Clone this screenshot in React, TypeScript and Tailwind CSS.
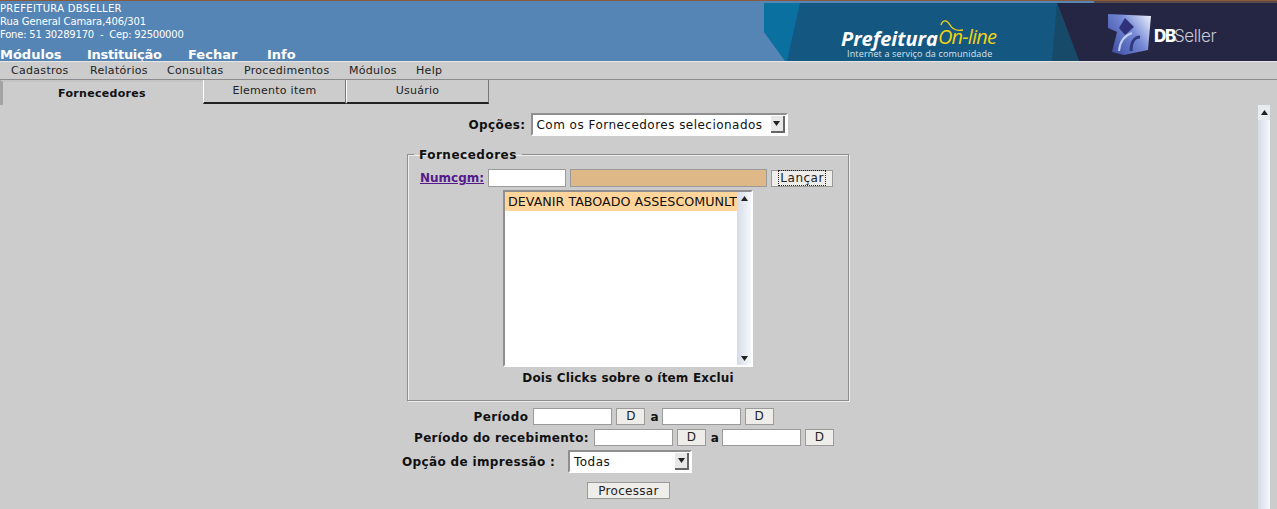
import type { ReactNode } from "react";

const menu = [
  { label: "Cadastros", w: "w-[79px]" },
  { label: "Relatórios", w: "w-[77px]" },
  { label: "Consultas", w: "w-[77px]" },
  { label: "Procedimentos", w: "w-[105px]" },
  { label: "Módulos", w: "w-[67px]" },
  { label: "Help", w: "w-[30px]" },
];

function DateField() {
  return (
    <>
      <input className="h-[17px] w-[79px] border border-[#9a9a9a] bg-white" />
      <button className="ml-[4px] h-[17px] w-[29px] border border-[#9a9a9a] bg-[#efedea] text-[12px] font-normal leading-[15px] text-[#222]">
        D
      </button>
    </>
  );
}

function Arrow({ up }: { up?: boolean }) {
  return (
    <svg width="7" height="5" viewBox="0 0 7 5" className="block">
      <path d={up ? "M3.5 0L7 5H0Z" : "M0 0H7L3.5 5Z"} fill="#222" />
    </svg>
  );
}

function SelectBox({ className, children }: { className: string; children: ReactNode }) {
  return (
    <div
      className={`flex items-center border-2 border-t-[#8f8f8f] border-l-[#8f8f8f] border-r-white border-b-white bg-white ${className}`}
    >
      <span className="flex-1 whitespace-nowrap pl-[4px] text-[12px] tracking-[0.47px] text-[#111]">{children}</span>
      <span className="mr-[1px] flex h-[17px] w-[14px] items-center justify-center border-r-2 border-b-2 border-[#666] bg-[#e8e8e8]">
        <Arrow />
      </span>
    </div>
  );
}

function Banner() {
  return (
    <div className="relative h-[58px] w-[513px] shrink-0 overflow-hidden bg-[#145780]">
      <svg width="513" height="58" viewBox="0 0 513 58" className="absolute inset-0">
        <defs>
          <linearGradient id="cube" x1="0" y1="0.8" x2="1" y2="0.1">
            <stop offset="0" stopColor="#3f4fa6" />
            <stop offset="0.55" stopColor="#7488d4" />
            <stop offset="1" stopColor="#e6ecfb" />
          </linearGradient>
        </defs>
        <path d="M0 0H36L23 58H21L0 29Z" fill="#0a709f" />
        <path d="M0 29L21 58H0Z" fill="#5585b5" />
        <path d="M293 0H513V58H315Z" fill="#252643" />
        <path d="M293 0L315 58H288Z" fill="#174a69" />
        <g className="blur-[0.5px]">
          <path d="M344 11L387 13L384 47L360 52L348 49L353 29L344 25Z" fill="url(#cube)" />
          <path d="M361 15L370 24L361 32L355 25Z" fill="#2f3278" />
          <path d="M355 48C356 36 362 32 368 30" fill="none" stroke="#c0ccf0" strokeWidth="2" />
          <path d="M367 48C367 40 370 34 376 34" fill="none" stroke="#2e3a7d" strokeWidth="3" />
        </g>
      </svg>
      <span className="absolute left-[77px] top-[26px] font-['Open_Sans',sans-serif] text-[20px] font-bold italic leading-[20px] text-white">
        Prefeitura
      </span>
      <span className="absolute left-[174px] top-[24px] font-['Open_Sans',sans-serif] text-[20px] italic leading-[20px] tracking-[-0.8px] text-[#f0d215]">
        On-line
      </span>
      <svg width="24" height="14" viewBox="0 0 24 14" className="absolute left-[176px] top-[16px]">
        <path d="M1 6C3 0 7 1 10 6C13 11 18 12 23 11" fill="none" stroke="#f0d215" strokeWidth="1.4" />
      </svg>
      <span className="absolute left-[83px] top-[46px] whitespace-nowrap font-['Open_Sans',sans-serif] text-[9px] leading-[10px] tracking-[0.15px] text-[#d8e4ec]">
        Internet a serviço da comunidade
      </span>
      <span className="absolute left-[390px] top-[23px] font-['Inter',sans-serif] text-[17px] font-extrabold leading-[20px] tracking-[-1.2px] text-white">
        DB
      </span>
      <span className="absolute left-[410px] top-[23px] font-['Inter',sans-serif] text-[17px] font-light leading-[20px] tracking-[-0.4px] text-[#c9cad6]">
        Seller
      </span>
    </div>
  );
}

export default function App() {
  return (
    <div className="flex h-[509px] w-[1277px] flex-col overflow-hidden bg-[#cccccc] font-['DejaVu_Sans',sans-serif] text-[#111]">
      <div className="h-[1px] bg-[#8a5a3c]" />
      <header className="flex h-[60px] bg-[#5585b5]">
        <div className="flex-1 pt-[1px] text-[10px] leading-[13px] text-white">
          <p className="tracking-[0.32px]">PREFEITURA DBSELLER</p>
          <p className="tracking-[-0.1px]">Rua General Camara,406/301</p>
          <p className="whitespace-pre tracking-[-0.2px]">Fone: 51 30289170  -  Cep: 92500000</p>
          <nav className="mt-[6px] flex text-[13px] font-bold leading-[16px]">
            <span className="w-[87px]">Módulos</span>
            <span className="w-[101px] tracking-[-0.3px]">Instituição</span>
            <span className="w-[79px]">Fechar</span>
            <span>Info</span>
          </nav>
        </div>
        <div className="flex flex-col justify-end">
          <div className="flex h-[2px] justify-end">
            <div className="w-[183px] bg-[#5c4a48]" />
          </div>
          <Banner />
        </div>
      </header>
      <div className="h-[1px] bg-[#e6e6e6]" />
      <nav className="flex h-[18px] items-center border-b border-[#8c8c8c] pl-[11px] text-[11px] leading-[14px] tracking-[0.3px] text-[#222]">
        {menu.map((m) => (
          <span key={m.label} className={m.w}>
            {m.label}
          </span>
        ))}
      </nav>

      <div className="flex h-[25px]">
        <div className="flex w-[203px] items-center justify-center border-l-[3px] border-t-[2px] border-l-[#a3a3a3] border-t-[#c4c4c4] pr-[2px] pt-[2px] text-[11px] font-bold tracking-[0.3px]">
          Fornecedores
        </div>
        {["Elemento item", "Usuário"].map((t) => (
          <div
            key={t}
            className="flex h-[24px] w-[143px] items-center justify-center border-b-2 border-l border-r border-b-[#222] border-l-white border-r-[#777] pt-[1px] text-[11px] tracking-[0.25px] text-[#222]"
          >
            {t}
          </div>
        ))}
      </div>

      <div className="flex flex-1">
        <main className="flex w-[1258px] flex-col items-center text-[12px] font-bold">
          <div className="mr-[2px] mt-[8px] flex items-center gap-[5px]">
            <span className="tracking-[0.4px]">Opções:</span>
            <SelectBox className="h-[23px] w-[257px] font-normal">Com os Fornecedores selecionados</SelectBox>
          </div>

          <fieldset className="mr-[2px] mt-[10px] h-[255px] w-[442px] border border-[#8e8e8e] shadow-[inset_1px_1px_0_#eee,1px_1px_0_#eee]">
            <legend className="ml-[6px] px-[5px] pt-[2px] text-[12px] leading-[14px] tracking-[0.5px]">Fornecedores</legend>
            <div className="ml-[12px] mt-[7px] flex items-center">
              <a className="text-[#551a8b] underline">Numcgm:</a>
              <input className="ml-[4px] h-[18px] w-[78px] border border-[#9a9a9a] bg-white" />
              <input className="ml-[4px] h-[18px] w-[197px] border border-[#9a9a9a] bg-[#deb887]" />
              <button className="ml-[4px] h-[17px] w-[62px] border border-[#9a9a9a] bg-[#efedea] text-[12px] font-normal leading-[13px] tracking-[0.5px] text-[#222]">
                <span className="border border-dotted border-[#222] px-[1px]">Lançar</span>
              </button>
            </div>
            <div className="mx-auto mt-[3px] flex h-[177px] w-[250px] border-2 border-l-[#8f8f8f] border-t-[#8f8f8f] border-r-white border-b-white bg-white">
              <div className="w-[234px] overflow-hidden">
                <div className="h-[19px] whitespace-nowrap bg-[#ffd59b] pl-[3px] text-[12.7px] font-normal leading-[19px]">
                  DEVANIR TABOADO ASSESCOMUNLTDA
                </div>
              </div>
              <div className="flex w-[14px] flex-col items-center justify-between bg-linear-to-r from-[#d5dce8] to-[#f6f8fc] py-[4px]">
                <Arrow up />
                <Arrow />
              </div>
            </div>
            <p className="mt-[2px] text-center text-[12px] leading-[18px] tracking-[0.17px]">Dois Clicks sobre o ítem Exclui</p>
          </fieldset>

          <div className="mr-[11px] mt-[5px] flex h-[21px] items-center">
            <span className="mr-[5px] tracking-[0.42px]">Período</span>
            <DateField />
            <span className="ml-[5px] mr-[3px]">a</span>
            <DateField />
          </div>
          <div className="mr-[10px] flex h-[21px] items-center">
            <span className="mr-[5px] tracking-[0.33px]">Período do recebimento:</span>
            <DateField />
            <span className="ml-[5px] mr-[3px]">a</span>
            <DateField />
          </div>
          <div className="mr-[164px] mt-[2px] flex w-[290px] items-center">
            <span className="w-[166px] whitespace-nowrap tracking-[0.35px]">Opção de impressão :</span>
            <SelectBox className="h-[23px] w-[124px] font-normal">Todas</SelectBox>
          </div>
          <button className="mr-[1px] mt-[9px] h-[17px] w-[83px] border border-[#9a9a9a] bg-[#efedea] text-[12px] font-normal leading-[14px] tracking-[0.3px] text-[#222]">
            Processar
          </button>
        </main>
        <aside className="flex w-[12px] flex-col items-center bg-linear-to-r from-[#d5dce8] to-[#f6f8fc]">
          <div className="flex h-[15px] w-full items-center justify-center bg-[#e8ebf0]">
            <Arrow up />
          </div>
        </aside>
      </div>
    </div>
  );
}
